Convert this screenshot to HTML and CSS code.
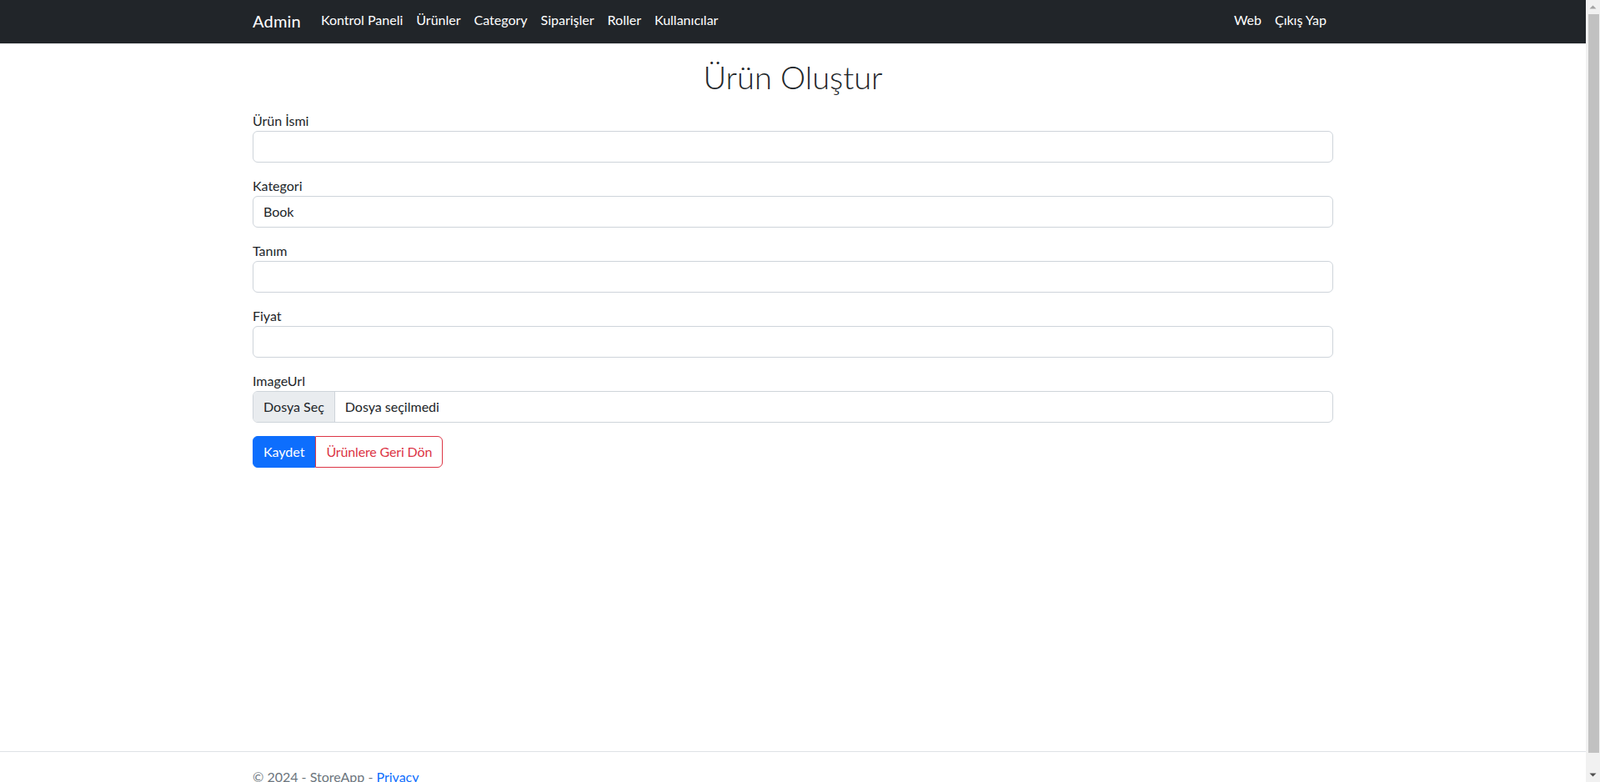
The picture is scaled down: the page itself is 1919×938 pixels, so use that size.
FILE: index.html
```html
<!DOCTYPE html>
<html lang="tr">
<head>
<meta charset="utf-8">
<title>Ürün Oluştur - StoreApp</title>
<link rel="stylesheet" href="styles.css">
</head>
<body>
<div class="viewport">
  <div class="page">
    <header class="navbar">
      <div class="container nav-inner">
        <a class="brand" href="#">Admin</a>
        <ul class="nav-list">
          <li><a class="nav-link" href="#">Kontrol Paneli</a></li>
          <li><a class="nav-link" href="#">Ürünler</a></li>
          <li><a class="nav-link" href="#">Category</a></li>
          <li><a class="nav-link" href="#">Siparişler</a></li>
          <li><a class="nav-link" href="#">Roller</a></li>
          <li><a class="nav-link" href="#">Kullanıcılar</a></li>
        </ul>
        <ul class="nav-list nav-right">
          <li><a class="nav-link" href="#">Web</a></li>
          <li><a class="nav-link" href="#">Çıkış Yap</a></li>
        </ul>
      </div>
    </header>

    <main class="container main">
      <h1 class="title">Ürün Oluştur</h1>
      <form class="form">
        <div class="field">
          <label class="label" for="name">Ürün İsmi</label>
          <input class="form-control" id="name" type="text">
        </div>
        <div class="field">
          <label class="label" for="cat">Kategori</label>
          <select class="form-control select" id="cat">
            <option>Book</option>
          </select>
        </div>
        <div class="field">
          <label class="label" for="desc">Tanım</label>
          <input class="form-control" id="desc" type="text">
        </div>
        <div class="field">
          <label class="label" for="price">Fiyat</label>
          <input class="form-control" id="price" type="text">
        </div>
        <div class="field">
          <label class="label">ImageUrl</label>
          <div class="form-control file-input">
            <span class="file-btn">Dosya Seç</span>
            <span class="file-name">Dosya seçilmedi</span>
          </div>
        </div>
        <div class="btn-group">
          <button class="btn btn-primary" type="button">Kaydet</button>
          <a class="btn btn-outline-danger" href="#">Ürünlere Geri Dön</a>
        </div>
      </form>
    </main>

    <footer class="footer">
      <div class="container">© 2024 - StoreApp - <a class="footer-link" href="#">Privacy</a></div>
    </footer>
  </div>

  <div class="scrollbar" aria-hidden="true">
    <span class="sb-btn">
      <svg width="17" height="17" viewBox="0 0 17 17"><path d="M4.5 10.5 L8.5 6.5 L12.5 10.5 Z" fill="#a3a3a3"/></svg>
    </span>
    <span class="sb-track"><span class="sb-thumb"></span></span>
    <span class="sb-btn">
      <svg width="17" height="17" viewBox="0 0 17 17"><path d="M4.5 6.5 L8.5 10.5 L12.5 6.5 Z" fill="#505050"/></svg>
    </span>
  </div>
</div>
</body>
</html>
```

FILE: styles.css
```css
* { box-sizing: border-box; }

html { font-size: 16px; }

body {
  margin: 0;
  font-family: Lato, "Noto Sans", "DejaVu Sans", sans-serif;
  font-size: 16px;
  line-height: 1.5;
  color: #212529;
  background: #fff;
}

.viewport {
  display: flex;
  height: 100vh;
  overflow: hidden;
}

.page {
  flex: 1;
  min-width: 0;
  min-height: 962px;
  display: flex;
  flex-direction: column;
}

/* fake classic scrollbar */
.scrollbar {
  width: 17px;
  flex-shrink: 0;
  background: #f1f1f1;
  display: flex;
  flex-direction: column;
}
.sb-btn {
  display: block;
  height: 17px;
  flex-shrink: 0;
}
.sb-btn svg { display: block; }
.sb-track {
  flex: 1;
  display: flex;
  flex-direction: column;
  padding: 0 1px 0 3px;
}
.sb-thumb {
  display: block;
  height: 886px;
  background: #c1c1c1;
}

.container {
  width: 100%;
  max-width: 1320px;
  margin: 0 auto;
  padding: 0 12px;
}

/* Navbar */
.navbar {
  background: #212529;
  height: 53px;
  padding: 4px 0 9px;
  border-bottom: 1px solid #e6e7e8;
}
.nav-inner {
  display: flex;
  align-items: center;
  height: 40px;
}
.brand {
  color: #fff;
  text-decoration: none;
  font-size: 20px;
  line-height: 30px;
  margin-right: 16px;
  margin-top: 1px;
  letter-spacing: 0.2px;
}
.nav-list {
  list-style: none;
  margin: 0;
  padding: 0;
  display: flex;
}
.nav-right { margin-left: auto; }
.nav-link {
  display: block;
  color: #fff;
  text-decoration: none;
  padding: 8px;
  line-height: 24px;
}

/* Main */
.main {
  flex: 1;
  padding-top: 15px;
}
.title {
  margin: 0 0 17px;
  text-align: center;
  font-size: 38px;
  font-weight: 300;
  line-height: 48px;
}
.field { margin-bottom: 16px; }
.label {
  display: block;
  line-height: 24px;
}
.form-control {
  display: block;
  width: 100%;
  height: 38px;
  padding: 6px 12px;
  font-family: inherit;
  font-size: 16px;
  line-height: 24px;
  color: #212529;
  background: #fff;
  border: 1px solid #ced4da;
  border-radius: 6px;
  appearance: none;
  -webkit-appearance: none;
  outline: none;
}
.select { cursor: default; }

.file-input {
  display: flex;
  align-items: stretch;
  padding: 0;
  overflow: hidden;
}
.file-btn {
  background: #e9ecef;
  border-right: 1px solid #ced4da;
  padding: 6px 12px;
  margin-right: 12px;
}
.file-name { padding: 6px 0; }

/* Buttons */
.btn-group { display: inline-flex; }
.btn {
  display: inline-block;
  font-family: inherit;
  font-size: 16px;
  line-height: 24px;
  padding: 6px 12px;
  border: 1px solid transparent;
  text-decoration: none;
  cursor: pointer;
}
.btn-primary {
  background: #0d6efd;
  border-color: #0d6efd;
  color: #fff;
  border-radius: 6px 0 0 6px;
}
.btn-outline-danger {
  background: #fff;
  border-color: #dc3545;
  color: #dc3545;
  border-radius: 0 6px 6px 0;
  letter-spacing: -0.15px;
}

/* Footer */
.footer {
  border-top: 1px solid #dee2e6;
  line-height: 60px;
  color: #6c757d;
  white-space: nowrap;
}
.footer-link { color: #0d6efd; text-decoration: none; }
```
